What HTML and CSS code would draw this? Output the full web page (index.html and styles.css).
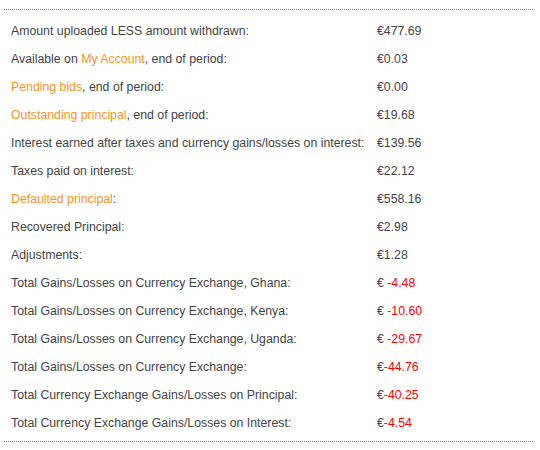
FILE: index.html
```html
<!DOCTYPE html>
<html>
<head>
<meta charset="utf-8">
<link rel="stylesheet" href="styles.css">
</head>
<body>
<div class="summary">
  <table class="stats">
    <tr><td class="label">Amount uploaded LESS amount withdrawn:</td><td class="value">€477.69</td></tr>
    <tr><td class="label">Available on <a class="link" href="#">My Account</a>, end of period:</td><td class="value">€0.03</td></tr>
    <tr><td class="label"><a class="link" href="#">Pending bids</a>, end of period:</td><td class="value">€0.00</td></tr>
    <tr><td class="label"><a class="link" href="#">Outstanding principal</a>, end of period:</td><td class="value">€19.68</td></tr>
    <tr><td class="label">Interest earned after taxes and currency gains/losses on interest:</td><td class="value">€139.56</td></tr>
    <tr><td class="label">Taxes paid on interest:</td><td class="value">€22.12</td></tr>
    <tr><td class="label"><a class="link" href="#">Defaulted principal</a>:</td><td class="value">€558.16</td></tr>
    <tr><td class="label">Recovered Principal:</td><td class="value">€2.98</td></tr>
    <tr><td class="label">Adjustments:</td><td class="value">€1.28</td></tr>
    <tr><td class="label">Total Gains/Losses on Currency Exchange, Ghana:</td><td class="value">€ <span class="neg">-4.48</span></td></tr>
    <tr><td class="label">Total Gains/Losses on Currency Exchange, Kenya:</td><td class="value">€ <span class="neg">-10.60</span></td></tr>
    <tr><td class="label">Total Gains/Losses on Currency Exchange, Uganda:</td><td class="value">€ <span class="neg">-29.67</span></td></tr>
    <tr><td class="label">Total Gains/Losses on Currency Exchange:</td><td class="value">€<span class="neg">-44.76</span></td></tr>
    <tr><td class="label">Total Currency Exchange Gains/Losses on Principal:</td><td class="value">€<span class="neg">-40.25</span></td></tr>
    <tr><td class="label">Total Currency Exchange Gains/Losses on Interest:</td><td class="value">€<span class="neg">-4.54</span></td></tr>
  </table>
</div>
</body>
</html>
```
FILE: styles.css
```css
html, body {
  margin: 0;
  padding: 0;
  background: #fff;
}
body {
  font-family: "Liberation Sans", Arial, sans-serif;
  font-size: 12.3px;
  color: #444;
}
.summary {
  margin: 9px 7px 0 4px;
  border-top: 1px dotted #888;
  border-bottom: 1px dotted #888;
  padding: 7px 0 4px 0;
}
.stats {
  border-collapse: collapse;
}
.stats td {
  height: 28px;
  padding: 0;
  line-height: 14px;
  vertical-align: middle;
  white-space: nowrap;
}
.label {
  padding-left: 7px !important;
  width: 366px;
}
.link {
  color: #f7941d;
  text-decoration: none;
}
.neg {
  color: #f00;
}
```
